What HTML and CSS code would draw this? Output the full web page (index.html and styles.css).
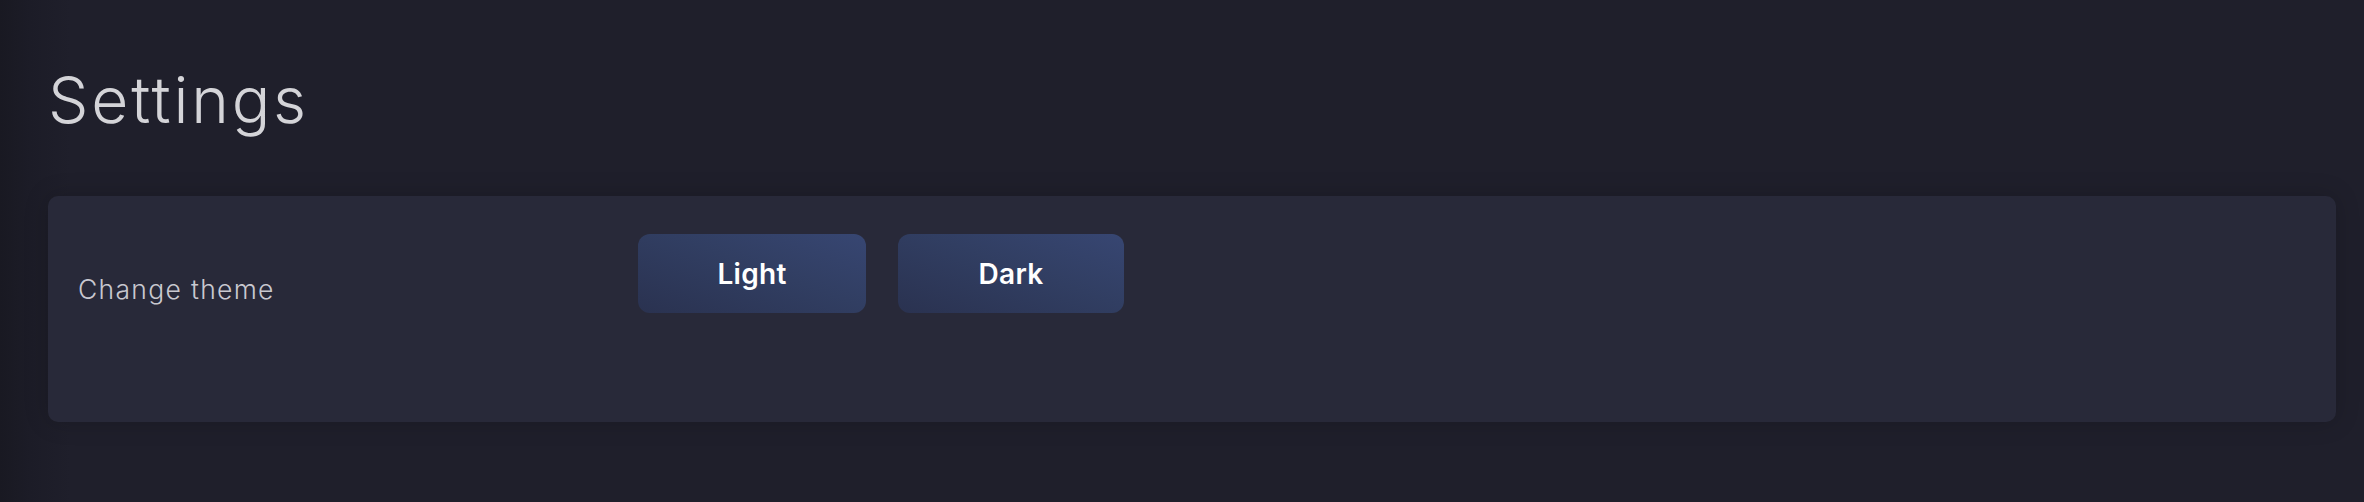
FILE: index.html
```html
<!DOCTYPE html>
<html lang="en">
<head>
<meta charset="utf-8">
<title>Settings</title>
<link rel="stylesheet" href="styles.css">
</head>
<body>
<main class="page">
  <h1 class="title">Settings</h1>
  <section class="card">
    <div class="row">
      <div class="label">Change theme</div>
      <div class="options">
        <button class="btn" type="button">Light</button>
        <button class="btn" type="button">Dark</button>
      </div>
    </div>
  </section>
</main>
</body>
</html>
```
FILE: styles.css
```css
html, body {
  margin: 0;
  padding: 0;
  height: 100%;
}
body {
  background: linear-gradient(to right, #191922 0, #1c1c27 30px, #1f1f2b 70px, #1f1f2b 100%);
  font-family: Inter, "Noto Sans", sans-serif;
  overflow: hidden;
}
.page {
  padding: 68px 28px 0 48px;
}
.title {
  margin: 0;
  font-size: 64px;
  line-height: 64px;
  font-weight: 300;
  letter-spacing: 2.8px;
  color: #d4d4d8;
}
.card {
  margin-top: 64px;
  height: 226px;
  box-sizing: border-box;
  padding: 38px 30px;
  background: #282939;
  border-radius: 10px;
  box-shadow: 0 0 24px rgba(0, 0, 0, 0.18);
}
.row {
  display: flex;
  align-items: flex-start;
}
.label {
  width: 560px;
  flex: none;
  margin-top: 42px;
  font-size: 26.5px;
  line-height: 26px;
  font-weight: 300;
  color: #c8c8d0;
  letter-spacing: 1.3px;
}
.options {
  display: flex;
  gap: 32px;
}
.btn {
  width: 228px;
  height: 79px;
  border: none;
  border-radius: 12px;
  background: linear-gradient(20deg, #2a3250 0%, #313e62 55%, #374672 100%);
  color: #ffffff;
  font-family: Inter, "Noto Sans", sans-serif;
  font-size: 28px;
  line-height: 28px;
  font-weight: 600;
  letter-spacing: 0.3px;
  padding: 0;
  display: flex;
  align-items: center;
  justify-content: center;
}
.btn + .btn {
  width: 226px;
}
```
